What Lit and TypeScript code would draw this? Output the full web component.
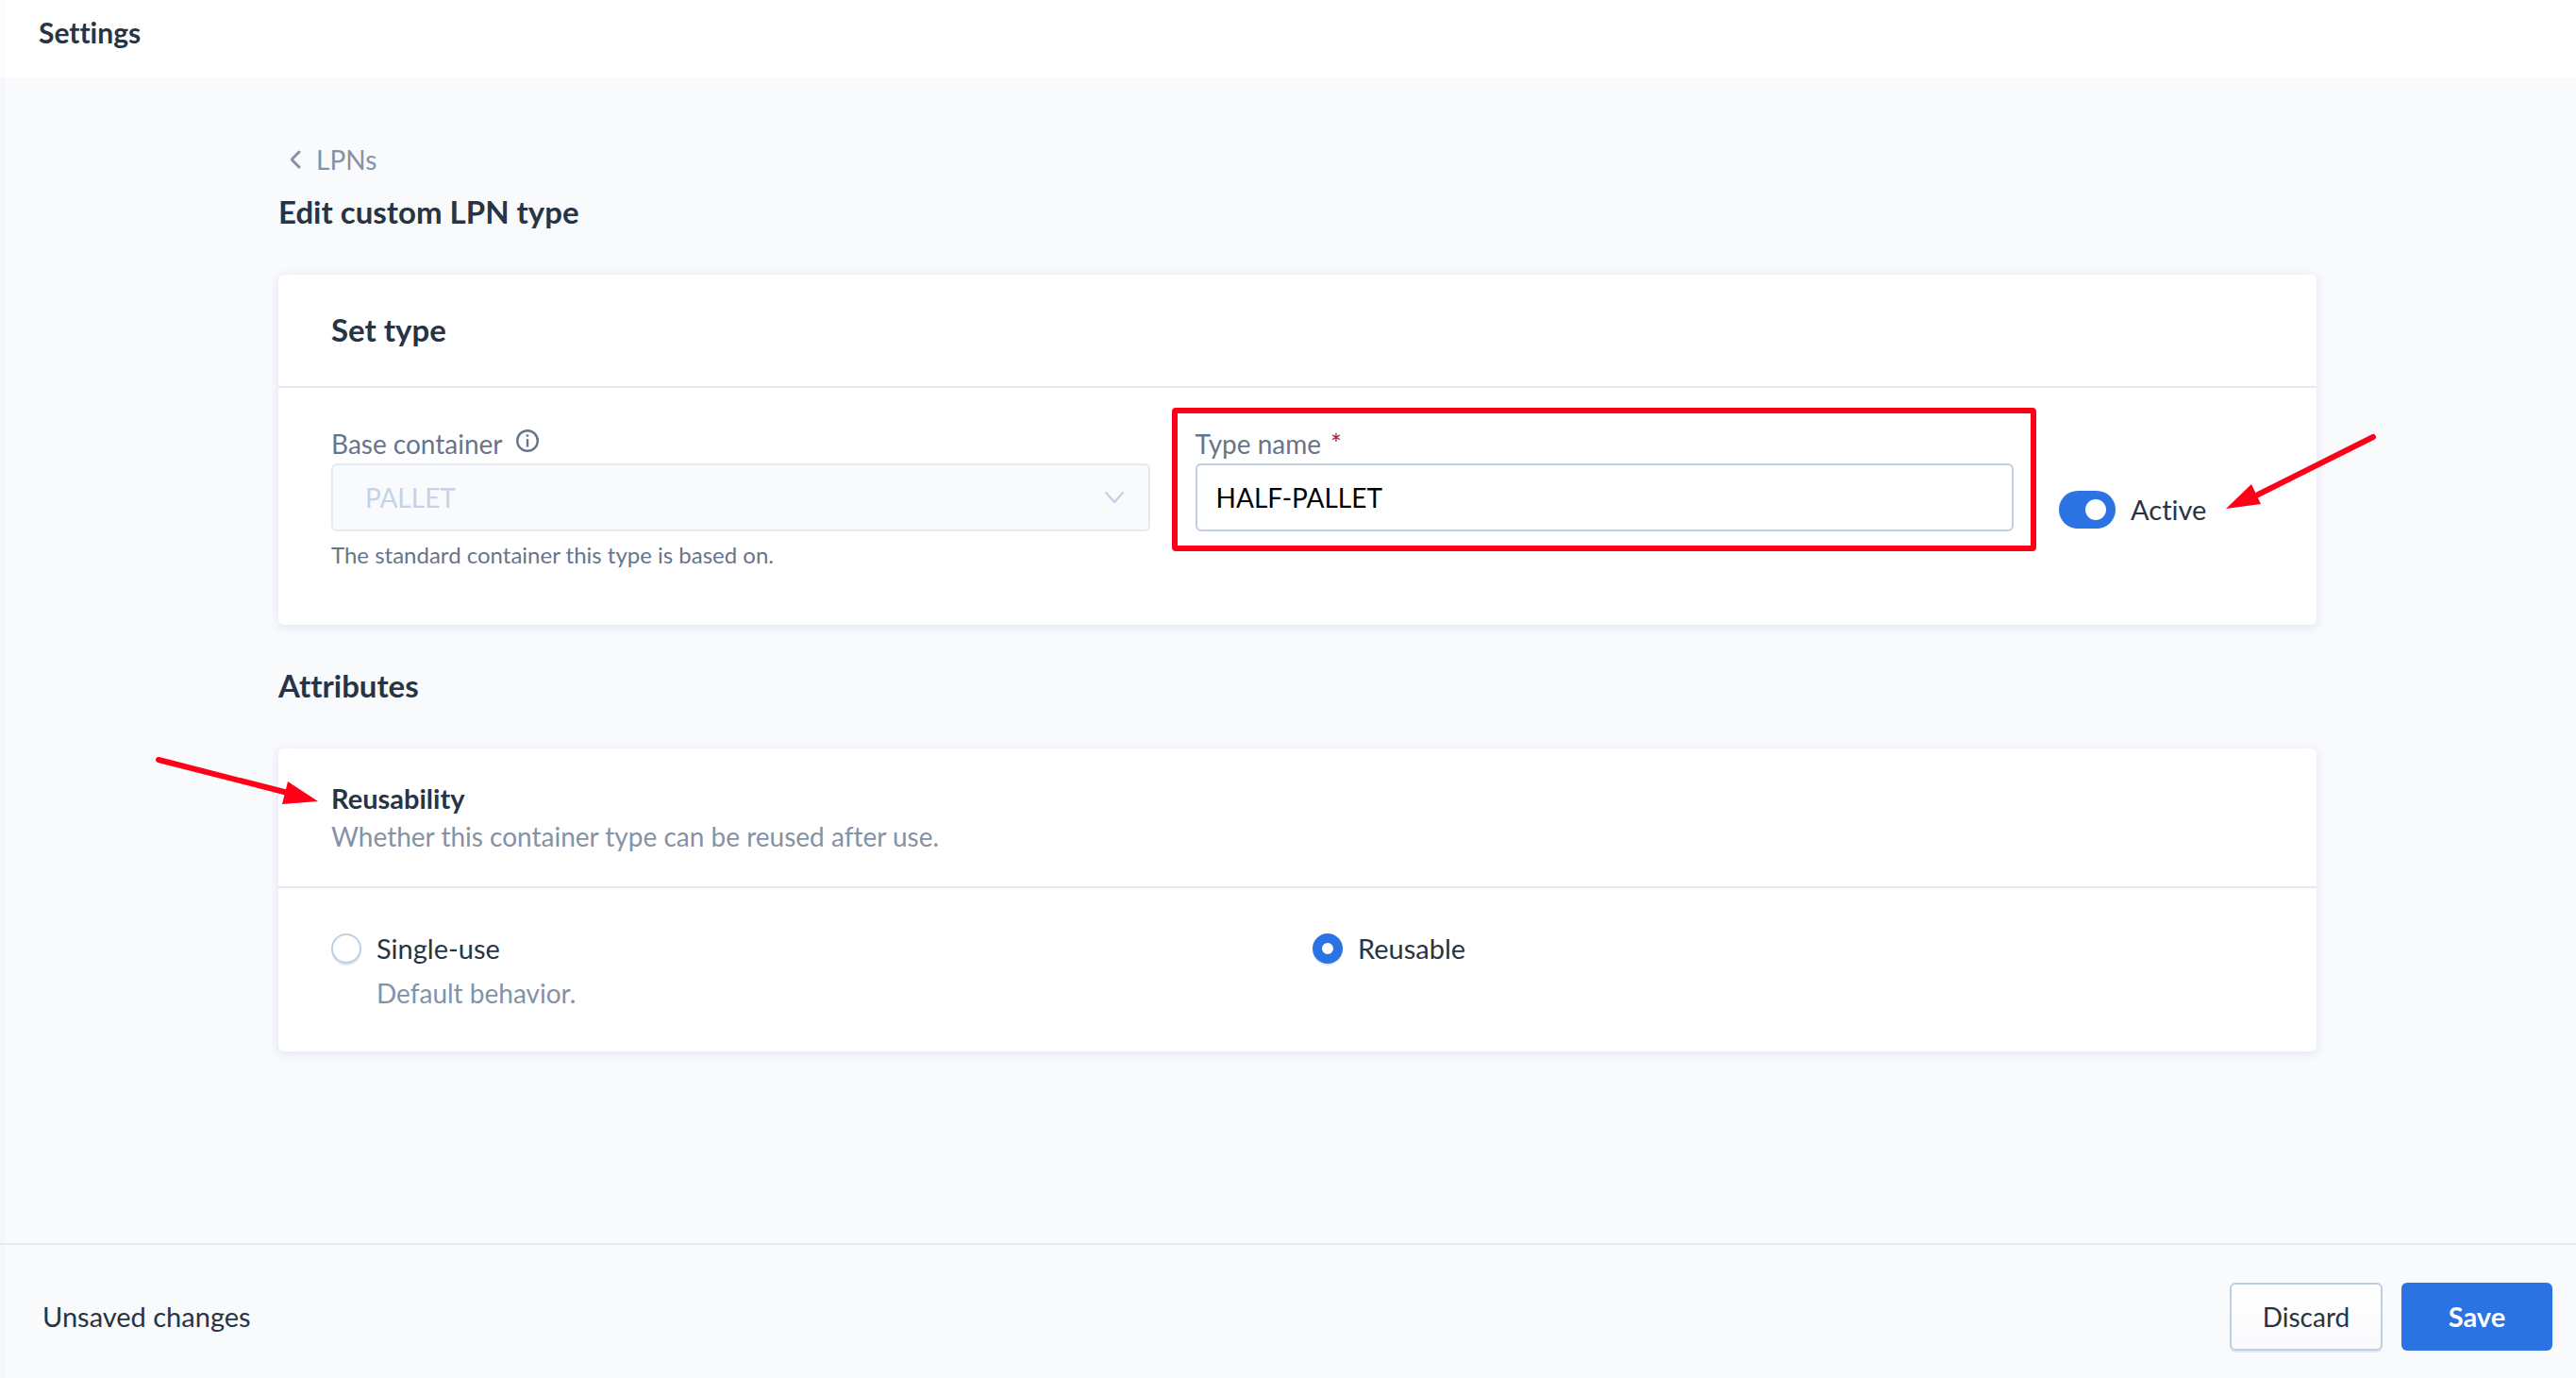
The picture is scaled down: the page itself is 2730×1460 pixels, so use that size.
import { LitElement, html, css } from 'lit';
import { customElement, state } from 'lit/decorators.js';

@customElement('app-root')
class AppRoot extends LitElement {
  static styles = css`
    :host {
      display: block;
      font-family: Lato, 'Liberation Sans', sans-serif;
      font-variant-ligatures: none;
      font-size: 28px;
      line-height: 40px;
      color: #273444;
    }
    * {
      box-sizing: border-box;
    }
    .page {
      display: flex;
      flex-direction: column;
      min-height: 100vh;
      background: #f9fafc;
      overflow: hidden;
      position: relative;
    }
    .edge {
      position: absolute;
      inset: 0 auto 0 0;
      width: 6px;
      background: rgba(228, 235, 246, 0.16);
      pointer-events: none;
    }
    .topbar {
      background: #fff;
      padding: 14px 41px 29px;
    }
    h1,
    h2,
    h3,
    p {
      margin: 0;
    }
    .topbar h1 {
      font-size: 30px;
      line-height: 40px;
    }
    main {
      flex: 1;
      padding: 65px 0 40px 20px;
    }
    .content {
      max-width: 2160px;
      margin: 0 auto;
    }
    .back {
      display: inline-flex;
      align-items: center;
      gap: 16px;
      padding-left: 12px;
      color: #8492a6;
      text-decoration: none;
    }
    .back svg {
      width: 12px;
      height: 20px;
    }
    h2 {
      font-size: 33px;
      line-height: 44px;
    }
    .title {
      margin: 13px 0 45px;
    }
    .section {
      margin: 42px 0 45px;
    }
    .card {
      background: #fff;
      border-radius: 6px;
      box-shadow: 0 2px 8px 2px #e5eaf4;
    }
    .head {
      padding: 36px 56px 38px;
      border-bottom: 2px solid #e5e9f2;
    }
    .head.tall {
      padding: 33px 56px;
    }
    h3 {
      display: inline-block;
      position: relative;
      font-size: 29px;
      line-height: 40px;
    }
    .muted {
      color: #8492a6;
    }
    .fields {
      display: grid;
      grid-template-columns: 4fr 4fr 1fr;
      gap: 48px;
      padding: 40px 56px 58px;
    }
    .field {
      position: relative;
      min-width: 0;
    }
    .label {
      display: flex;
      align-items: center;
      gap: 14px;
      height: 38px;
      margin-bottom: 2px;
      line-height: 38px;
      color: #66758a;
    }
    .label svg {
      width: 24px;
      height: 24px;
      margin-bottom: 6px;
    }
    .label.required {
      gap: 10px;
    }
    .star {
      color: #b01c1c;
    }
    .control {
      display: grid;
      align-items: center;
    }
    .control > * {
      grid-area: 1 / 1;
    }
    .control svg {
      justify-self: end;
      width: 20px;
      height: 12px;
      margin-right: 28px;
      pointer-events: none;
    }
    select,
    .text {
      width: 100%;
      height: 72px;
      margin: 0;
      border: 2px solid #c0cee4;
      border-radius: 6px;
      background: #fff;
      color: #000;
      font: inherit;
      font-size: 28px;
      outline: none;
    }
    .text {
      padding: 0 20px;
    }
    select {
      appearance: none;
      padding: 0 34px;
      border-color: #e5e9f2;
      background: #f9fafc;
      color: #c5d2e8;
      opacity: 1;
    }
    .hint {
      margin-top: 9px;
      font-size: 24px;
      line-height: 32px;
      color: #66758a;
    }
    .frame {
      position: absolute;
      inset: -19px -24px auto -25px;
      height: 152px;
      border: 6px solid #ff0018;
      border-radius: 4px;
      pointer-events: none;
    }
    .toggle {
      display: flex;
      align-items: center;
      align-self: start;
      gap: 16px;
      margin-top: 69px;
      position: relative;
      white-space: nowrap;
    }
    .switch {
      appearance: none;
      display: flex;
      align-items: center;
      justify-content: flex-start;
      flex: none;
      width: 60px;
      height: 40px;
      margin: 0;
      padding: 0 10px;
      border-radius: 20px;
      background: #c0cee4;
    }
    .switch:checked {
      justify-content: flex-end;
      background: #2b72e2;
    }
    .switch::before {
      content: '';
      width: 22px;
      height: 22px;
      border-radius: 50%;
      background: #fff;
    }
    .arrow {
      position: absolute;
      overflow: visible;
      pointer-events: none;
    }
    .arrow.left {
      width: 159px;
      height: 77px;
      left: 177px;
      top: -58px;
    }
    .arrow.right {
      width: 170px;
      height: 50px;
      right: calc(100% + 14px);
      top: -24px;
    }
    .options {
      display: grid;
      grid-template-columns: 1fr 1fr;
      gap: 32px;
      padding: 44px 56px 42px;
    }
    .option {
      display: flex;
      align-items: flex-start;
      gap: 16px;
    }
    .option label,
    .toggle label,
    .status {
      font-size: 29px;
    }
    .option p {
      margin-top: 7px;
    }
    .radio {
      appearance: none;
      flex: none;
      width: 32px;
      height: 32px;
      margin: 4px 0;
      border: 2px solid #c0cee4;
      border-radius: 50%;
      background: #fff;
      box-shadow: 0 2px 0 #e5e9f2;
    }
    .radio:checked {
      border: 10px solid #2b72e2;
    }
    footer {
      display: flex;
      align-items: center;
      gap: 20px;
      padding: 40px 25px 29px 45px;
      border-top: 2px solid #e5e9f2;
    }
    .status {
      flex: 1;
    }
    button {
      height: 72px;
      border: 0;
      border-radius: 6px;
      font: inherit;
      font-size: 28px;
    }
    .discard {
      min-width: 162px;
      border: 2px solid #c0cee4;
      background: linear-gradient(#fff, #f9fafc);
      box-shadow: 0 2px 0 #e5e9f2;
      color: #273444;
    }
    .save {
      min-width: 160px;
      background: #2b72e2;
      color: #fff;
      font-size: 29px;
      font-weight: 700;
    }
  `;

  @state() private active = true;
  @state() private typeName = 'HALF-PALLET';
  @state() private reuse = 'reusable';

  render() {
    return html`
      <div class="page">
        <header class="topbar"><h1>Settings</h1></header>
        <main>
          <div class="content">
            <a class="back" href="#lpns">
              <svg viewBox="0 0 12 20" fill="none" stroke="currentColor" stroke-width="3" stroke-linecap="round" stroke-linejoin="round">
                <path d="M10 2 3 9q-1 1 0 2l7 7" />
              </svg>
              LPNs
            </a>
            <h2 class="title">Edit custom LPN type</h2>

            <section class="card">
              <div class="head"><h2>Set type</h2></div>
              <div class="fields">
                <div class="field">
                  <label class="label" for="base">
                    Base container
                    <svg viewBox="0 0 24 24" fill="none" stroke="currentColor" stroke-width="2.4" aria-hidden="true">
                      <circle cx="12" cy="12" r="10.8" />
                      <path d="M12 10.2V18.6" stroke-width="2.4" />
                      <circle cx="12" cy="6.6" r="1.4" fill="currentColor" stroke="none" />
                    </svg>
                  </label>
                  <div class="control">
                    <select id="base" disabled>
                      <option>PALLET</option>
                    </select>
                    <svg viewBox="0 0 20 12" fill="none" stroke="#c0cee4" stroke-width="2" stroke-linecap="round" stroke-linejoin="round">
                      <path d="M1 1l9 10 9-10" />
                    </svg>
                  </div>
                  <p class="hint">The standard container this type is based on.</p>
                </div>

                <div class="field">
                  <label class="label required" for="name">Type name <span class="star">*</span></label>
                  <div class="control">
                    <input
                      id="name"
                      class="text"
                      type="text"
                      required
                      .value=${this.typeName}
                      @input=${(e: Event) => (this.typeName = (e.target as HTMLInputElement).value)}
                    />
                  </div>
                  <div class="frame"></div>
                </div>

                <div class="toggle">
                  <input
                    id="active"
                    class="switch"
                    type="checkbox"
                    role="switch"
                    .checked=${this.active}
                    @change=${(e: Event) => (this.active = (e.target as HTMLInputElement).checked)}
                  />
                  <label for="active">Active</label>
                  <svg class="arrow left" viewBox="0 0 159 77" aria-hidden="true">
                    <path d="M156 1 34 62" stroke="#ff0018" stroke-width="6" stroke-linecap="round" />
                    <path d="M0 77 27 51 37 72z" fill="#ff0018" />
                  </svg>
                </div>
              </div>
            </section>

            <h2 class="section">Attributes</h2>

            <section class="card">
              <div class="head tall">
                <h3 id="reuse">
                  Reusability
                  <svg class="arrow right" viewBox="0 0 170 50" aria-hidden="true">
                    <path d="M1 3 138 38" stroke="#ff0018" stroke-width="6" stroke-linecap="round" />
                    <path d="M170 47 138 26 132 50z" fill="#ff0018" />
                  </svg>
                </h3>
                <p class="muted">Whether this container type can be reused after use.</p>
              </div>
              <div class="options" role="radiogroup" aria-labelledby="reuse">
                ${this.option('single', 'Single-use', 'Default behavior.')}
                ${this.option('reusable', 'Reusable')}
              </div>
            </section>
          </div>
        </main>
        <footer>
          <span class="status">Unsaved changes</span>
          <button class="discard" type="button">Discard</button>
          <button class="save" type="submit">Save</button>
        </footer>
        <div class="edge"></div>
      </div>
    `;
  }

  private option(id: string, label: string, note = '') {
    return html`
      <div class="option">
        <input
          id=${id}
          class="radio"
          type="radio"
          name="reusability"
          .checked=${this.reuse === id}
          @change=${() => (this.reuse = id)}
        />
        <div>
          <label for=${id}>${label}</label>
          ${note ? html`<p class="muted">${note}</p>` : null}
        </div>
      </div>
    `;
  }
}
